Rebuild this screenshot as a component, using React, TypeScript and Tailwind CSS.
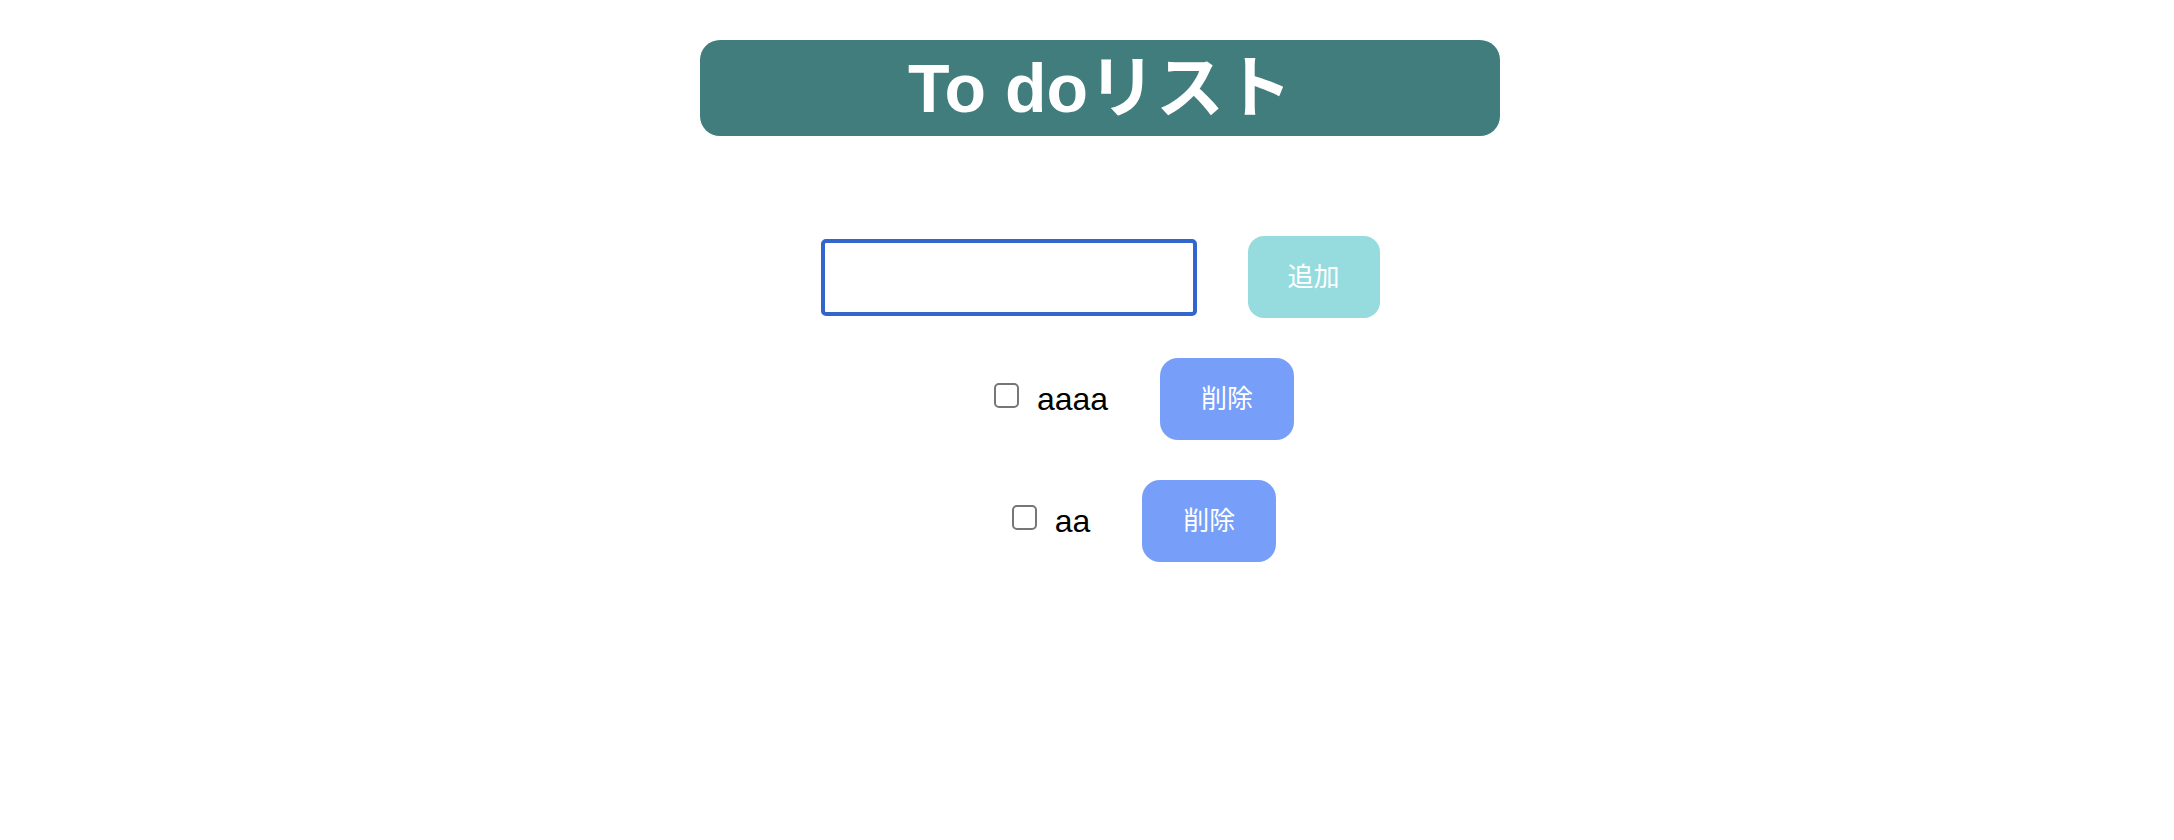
import React from "react";

const font = { fontFamily: '"Liberation Sans", "Noto Sans CJK JP", sans-serif' };

function Row({ text }: { text: string }) {
  return (
    <div className="flex items-center pl-[88px]">
      <span className="w-[25px] h-[25px] mb-[8px] border-2 border-[#767676] rounded-[5px] bg-white" />
      <span className="ml-[18px] text-[32px] leading-none text-black">{text}</span>
      <button className="ml-[52px] w-[134px] h-[82px] rounded-[18px] bg-[#779ef8] text-white text-[26px] leading-none">
        削除
      </button>
    </div>
  );
}

export default function App() {
  return (
    <div className="w-full min-h-[840px] bg-white flex flex-col items-center pt-[40px] pl-[26px]" style={font}>
      <div className="w-[800px] h-[96px] rounded-[20px] bg-[#407d7c] flex items-center justify-center">
        <h1 className="text-[68px] font-bold text-white leading-none">To doリスト</h1>
      </div>
      <div className="mt-[100px] flex items-center">
        <div className="w-[376px] h-[77px] border-[4px] border-[#3366cc] rounded-[5px] bg-white" />
        <button className="ml-[51px] w-[132px] h-[82px] rounded-[16px] bg-[#96dcdf] text-white text-[26px] leading-none">
          追加
        </button>
      </div>
      <div className="mt-[40px] flex flex-col items-center gap-[40px]">
        <Row text="aaaa" />
        <Row text="aa" />
      </div>
    </div>
  );
}
